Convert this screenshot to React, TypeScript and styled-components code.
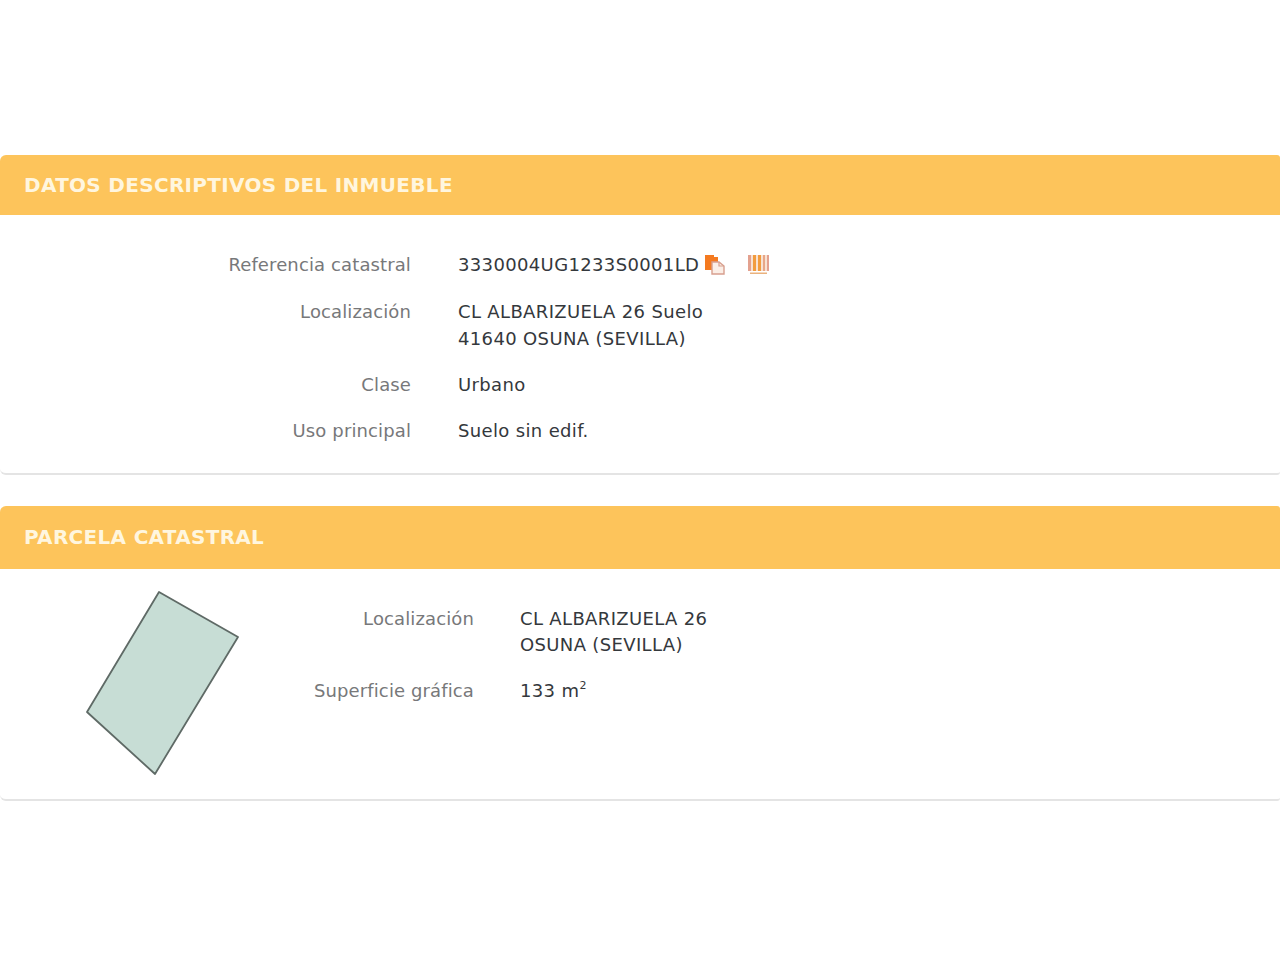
import * as React from "react";
import styled, { createGlobalStyle } from "styled-components";

const GlobalStyle = createGlobalStyle`
  html, body {
    margin: 0;
    padding: 0;
    background-color: #fff;
    font-family: "DejaVu Sans", Verdana, sans-serif;
  }
`;

const Page = styled.div`
  padding-top: 155px;
  width: 1280px;
`;

const Panel = styled.section<{ $gap?: number }>`
  margin-bottom: ${(p) => p.$gap ?? 0}px;
  background-color: #fff;
  border-radius: 6px 3px 3px 6px;
  border-bottom: 2px solid #e4e4e4;
`;

const PanelHeader = styled.h2<{ $height: number; $bottom?: number }>`
  display: flex;
  align-items: center;
  box-sizing: border-box;
  margin: 0;
  height: ${(p) => p.$height}px;
  padding: 0 0 ${(p) => p.$bottom ?? 0}px 24px;
  background-color: #fdc45b;
  border-radius: 6px 3px 0 0;
  color: #fff6df;
  font-family: "DejaVu Sans", Verdana, sans-serif;
  font-size: 20px;
  font-weight: bold;
  letter-spacing: 0.3px;
`;

const InfoBody = styled.div`
  padding: 36px 0 29px;
`;

const Row = styled.div<{ $labelWidth: number; $gap: number; $lineHeight: number; $bottom: number }>`
  display: grid;
  grid-template-columns: ${(p) => p.$labelWidth}px auto;
  column-gap: ${(p) => p.$gap}px;
  justify-content: start;
  margin-bottom: ${(p) => p.$bottom}px;
  font-size: 18px;
  line-height: ${(p) => p.$lineHeight}px;
  &:last-child {
    margin-bottom: 0;
  }
`;

const Label = styled.div`
  color: #77787a;
  text-align: right;
  letter-spacing: 0.12px;
`;

const Value = styled.div`
  display: flex;
  align-items: center;
  flex-wrap: wrap;
  color: #34383c;
  letter-spacing: 0.35px;
`;

const Line = styled.div`
  width: 100%;
`;

const Sup = styled.sup`
  font-size: 11px;
  line-height: 0;
  position: relative;
  top: -1px;
  vertical-align: super;
`;

const IconGroup = styled.span`
  display: inline-flex;
  align-items: center;
  gap: 23px;
  margin-left: 5px;
`;

const ParcelBody = styled.div`
  display: flex;
  align-items: flex-start;
  height: 230px;
`;

const ParcelFigure = styled.svg`
  display: block;
  flex: none;
  width: 300px;
  height: 230px;
`;

const ParcelInfo = styled.div`
  padding-top: 37px;
`;

const CopyIcon = () => (
  <svg width="21" height="21" viewBox="0 0 21 21">
    <path d="M1 1h9v2h4v13H1z" fill="#f47a20" />
    <path d="M8 8h7l5 4v8H8z" fill="#fbeee6" stroke="#d79f8e" strokeWidth="1.4" />
    <path d="M15 8v4h5" fill="none" stroke="#d79f8e" strokeWidth="1.2" />
  </svg>
);

const BarcodeIcon = () => (
  <svg width="21" height="20" viewBox="0 0 21 20">
    <rect x="0" y="0" width="21" height="16" fill="#f8e2d3" />
    <rect x="0" y="0" width="3" height="16" fill="#e3a18f" />
    <rect x="5" y="0" width="3" height="16" fill="#f29c3f" />
    <rect x="10" y="0" width="3" height="16" fill="#f29c3f" />
    <rect x="15" y="0" width="2" height="16" fill="#e8a686" />
    <rect x="19" y="0" width="2" height="16" fill="#e3a18f" />
    <rect x="2" y="17.5" width="17" height="1.5" fill="#eab27e" />
  </svg>
);

const App = () => {
  return (
    <Page>
      <GlobalStyle />
      <Panel $gap={31}>
        <PanelHeader $height={60}>DATOS DESCRIPTIVOS DEL INMUEBLE</PanelHeader>
        <InfoBody>
          <Row $labelWidth={411} $gap={47} $lineHeight={27} $bottom={20}>
            <Label>Referencia catastral</Label>
            <Value>
              3330004UG1233S0001LD
              <IconGroup>
                <CopyIcon />
                <BarcodeIcon />
              </IconGroup>
            </Value>
          </Row>
          <Row $labelWidth={411} $gap={47} $lineHeight={27} $bottom={19}>
            <Label>Localización</Label>
            <Value>
              <Line>CL ALBARIZUELA 26 Suelo</Line>
              <Line>41640 OSUNA (SEVILLA)</Line>
            </Value>
          </Row>
          <Row $labelWidth={411} $gap={47} $lineHeight={27} $bottom={19}>
            <Label>Clase</Label>
            <Value>Urbano</Value>
          </Row>
          <Row $labelWidth={411} $gap={47} $lineHeight={27} $bottom={19}>
            <Label>Uso principal</Label>
            <Value>Suelo sin edif.</Value>
          </Row>
        </InfoBody>
      </Panel>
      <Panel>
        <PanelHeader $height={63} $bottom={2}>PARCELA CATASTRAL</PanelHeader>
        <ParcelBody>
          <ParcelFigure viewBox="0 0 300 230">
            <polygon
              points="159,23 238,68 155,205 87,143"
              fill="#c7ddd5"
              stroke="#5f6a66"
              strokeWidth="1.8"
              strokeLinejoin="round"
            />
          </ParcelFigure>
          <ParcelInfo>
            <Row $labelWidth={174} $gap={46} $lineHeight={26} $bottom={20}>
              <Label>Localización</Label>
              <Value>
                <Line>CL ALBARIZUELA 26</Line>
                <Line>OSUNA (SEVILLA)</Line>
              </Value>
            </Row>
            <Row $labelWidth={174} $gap={46} $lineHeight={26} $bottom={20}>
              <Label>Superficie gráfica</Label>
              <Value>
                <span>
                  133 m<Sup>2</Sup>
                </span>
              </Value>
            </Row>
          </ParcelInfo>
        </ParcelBody>
      </Panel>
    </Page>
  );
};

export default App;
